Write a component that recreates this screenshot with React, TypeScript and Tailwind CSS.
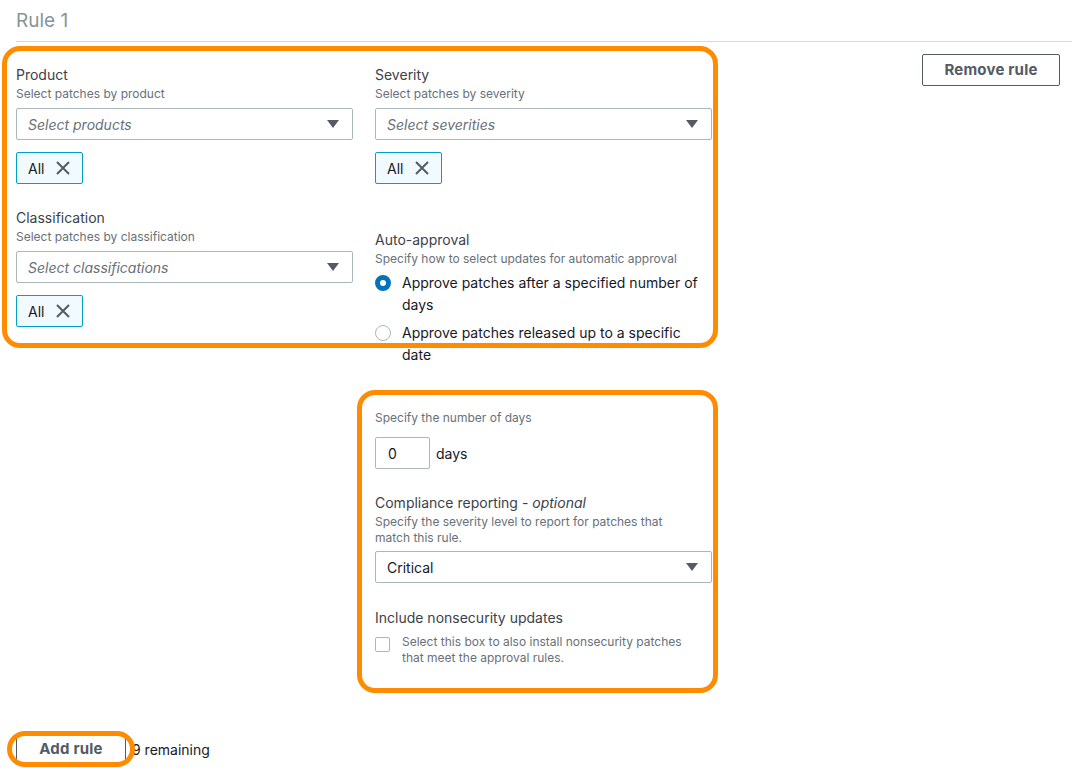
import React from "react";

const label = "text-[14px] leading-[22px] text-[#3b4249]";
const desc = "text-[12px] leading-[16px] text-[#687078]";

function Caret() {
  return (
    <svg className="w-[12px] h-[8px] shrink-0" viewBox="0 0 12 8" fill="#545b64">
      <path d="M0 0h12L6 8z" />
    </svg>
  );
}

function Select({ text, placeholder }: { text: string; placeholder?: boolean }) {
  return (
    <div className="h-[32px] border border-[#aab7b8] rounded-[2px] flex items-center justify-between pl-[11px] pr-[13px] bg-white">
      <span
        className={
          placeholder
            ? "text-[14px] italic text-[#687078]"
            : "text-[14px] text-[#16191f]"
        }
      >
        {text}
      </span>
      <Caret />
    </div>
  );
}

function Token() {
  return (
    <div className="mt-3 h-[32px] w-[67px] border border-[#00a1c9] bg-[#f1faff] rounded-[2px] flex items-center pl-[11px] gap-[12px]">
      <span className="text-[14px] text-[#16191f]">All</span>
      <svg className="w-[14px] h-[14px]" viewBox="0 0 14 14" fill="none" stroke="#545b64" strokeWidth={2}>
        <path d="M1 1l12 12M13 1L1 13" />
      </svg>
    </div>
  );
}

function Radio({ checked, children }: { checked?: boolean; children: React.ReactNode }) {
  return (
    <div className="flex items-start">
      <div className="w-[27px] shrink-0 pt-[3px]">
        {checked ? (
          <div className="w-[16px] h-[16px] rounded-full border-[5px] border-[#0073bb] bg-white" />
        ) : (
          <div className="w-[16px] h-[16px] rounded-full border-[1.5px] border-[#aab7b8] bg-white" />
        )}
      </div>
      <span className="text-[14px] leading-[22px] text-[#16191f]">{children}</span>
    </div>
  );
}

export default function App() {
  return (
    <div className="relative w-[1081px] h-[768px] bg-white overflow-hidden font-['Inter',sans-serif]">
      {/* Header */}
      <div className="ml-4 mr-[9px] pt-[9px] pb-[8px] border-b border-[#d5dbdb]">
        <h2 className="text-[19px] leading-[24px] text-[#879596]">Rule 1</h2>
      </div>

      <div className="flex items-start pl-4 pr-[21px]">
        <div className="grid grid-cols-[337px_337px] gap-x-[22px] pt-[22px]">
          {/* Left column */}
          <div className="flex flex-col">
            <div className={label}>Product</div>
            <div className={desc}>Select patches by product</div>
            <div className="mt-[6px]">
              <Select text="Select products" placeholder />
            </div>
            <Token />

            <div className={`${label} mt-[23px]`}>Classification</div>
            <div className={desc}>Select patches by classification</div>
            <div className="mt-[6px]">
              <Select text="Select classifications" placeholder />
            </div>
            <Token />
          </div>

          {/* Right column */}
          <div className="flex flex-col">
            <div className={label}>Severity</div>
            <div className={desc}>Select patches by severity</div>
            <div className="mt-[6px]">
              <Select text="Select severities" placeholder />
            </div>
            <Token />

            <div className={`${label} mt-[45px]`}>Auto-approval</div>
            <div className={desc}>Specify how to select updates for automatic approval</div>
            <div className="mt-[5px] flex flex-col gap-[6px]">
              <Radio checked>Approve patches after a specified number of days</Radio>
              <Radio>Approve patches released up to a specific date</Radio>
            </div>

            <div className={`${desc} mt-[44px]`}>Specify the number of days</div>
            <div className="mt-[11px] flex items-center gap-[6px]">
              <div className="w-[55px] h-[32px] border border-[#aab7b8] rounded-[2px] flex items-center pl-[12px] text-[14px] text-[#16191f]">
                0
              </div>
              <span className="text-[14px] text-[#16191f]">days</span>
            </div>

            <div className={`${label} mt-[23px]`}>
              Compliance reporting - <i>optional</i>
            </div>
            <div className={desc}>
              Specify the severity level to report for patches that
              <br />
              match this rule.
            </div>
            <div className="mt-[5px]">
              <Select text="Critical" />
            </div>

            <div className={`${label} mt-[24px]`}>Include nonsecurity updates</div>
            <div className="mt-[5px] flex items-start">
              <div className="w-[27px] shrink-0 pt-[3px]">
                <div className="w-[15px] h-[15px] border border-[#aab7b8] rounded-[2px] bg-white" />
              </div>
              <span className={desc}>
                Select this box to also install nonsecurity patches
                <br />
                that meet the approval rules.
              </span>
            </div>
          </div>
        </div>

        <div className="ml-auto mt-[12px]">
          <button className="w-[138px] h-[32px] border border-[#545b64] rounded-[2px] bg-white text-[15px] tracking-[0.2px] font-bold text-[#545b64]">
            Remove rule
          </button>
        </div>
      </div>

      {/* Footer */}
      <div className="absolute left-4 top-[733px] flex items-center gap-[6px]">
        <button className="w-[110px] h-[32px] border border-[#545b64] rounded-[2px] bg-white text-[15px] tracking-[0.2px] font-bold text-[#545b64]">
          Add rule
        </button>
        <span className="text-[14px] text-[#16191f]">9 remaining</span>
      </div>

      {/* Annotation highlights */}
      <div className="absolute left-[2px] top-[46px] w-[716px] h-[302px] border-[5px] border-[#ff8c00] rounded-[18px] pointer-events-none" />
      <div className="absolute left-[357px] top-[390px] w-[361px] h-[303px] border-[5px] border-[#ff8c00] rounded-[18px] pointer-events-none" />
      <div className="absolute left-[7px] top-[731px] w-[128px] h-[36px] border-[5px] border-[#ff8c00] rounded-full pointer-events-none" />
    </div>
  );
}
